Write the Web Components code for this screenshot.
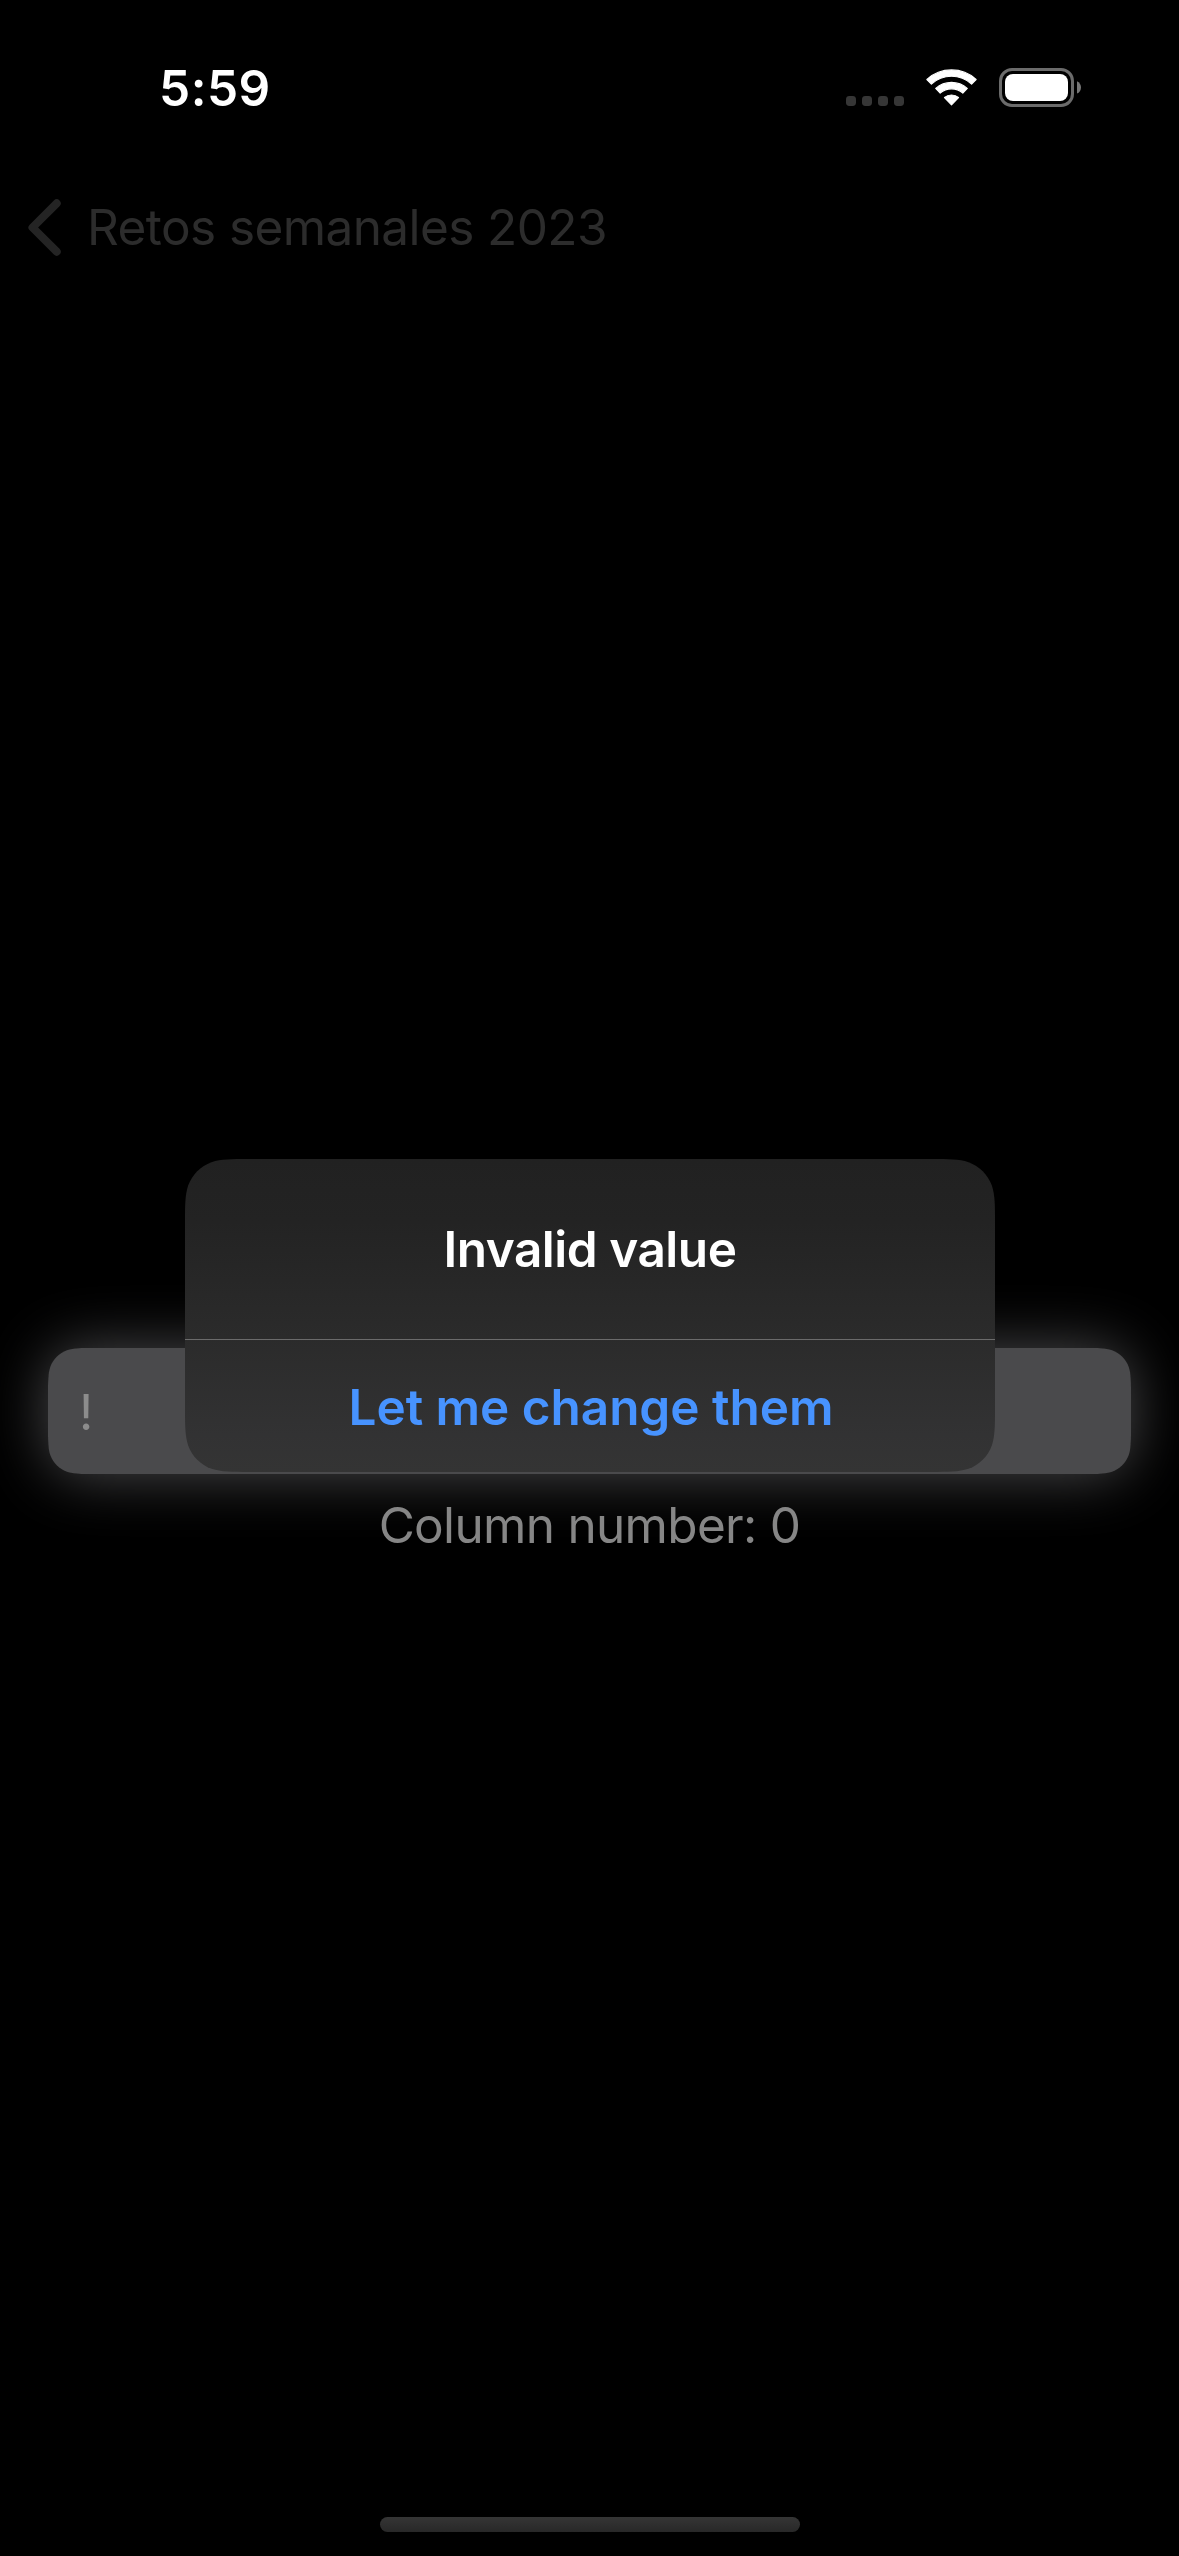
<!DOCTYPE html>
<html lang="es">
<head>
<meta charset="utf-8">
<title>Retos semanales 2023</title>
<style>
html, body { margin: 0; background: #000; }
body { width: 1179px; height: 2556px; overflow: hidden; font: 400 49.5px/60px Inter, sans-serif; }
</style>
</head>
<body>
<app-screen>
  <status-bar slot="status" time="5:59"></status-bar>
  <back-link slot="nav">Retos semanales 2023</back-link>
  <glow-field>!</glow-field>
  <result-label>Column number: 0</result-label>
  <home-indicator slot="home"></home-indicator>
  <alert-dialog slot="overlay">
    <span slot="title">Invalid value</span>
    <span slot="action">Let me change them</span>
  </alert-dialog>
</app-screen>
<script>
// Path of a rectangle with continuous-curvature corners
function continuousRect(w, h, r) {
  const a = 1.528665 * r, b = 1.088493 * r, c = 0.868407 * r, d = 0.631494 * r,
        e = 0.074911 * r, f = 0.372824 * r, g = 0.16906 * r;
  return `M${a},0L${w - a},0C${w - b},0,${w - c},0,${w - d},${e}C${w - f},${g},${w - g},${f},${w - e},${d}C${w},${c},${w},${b},${w},${a}` +
    `L${w},${h - a}C${w},${h - b},${w},${h - c},${w - e},${h - d}C${w - g},${h - f},${w - f},${h - g},${w - d},${h - e}C${w - c},${h},${w - b},${h},${w - a},${h}` +
    `L${a},${h}C${b},${h},${c},${h},${d},${h - e}C${f},${h - g},${g},${h - f},${e},${h - d}C0,${h - c},0,${h - b},0,${h - a}` +
    `L0,${a}C0,${b},0,${c},${e},${d}C${g},${f},${f},${g},${d},${e}C${c},0,${b},0,${a},0Z`;
}
class Base extends HTMLElement {
  connectedCallback() {
    if (!this.shadowRoot) this.attachShadow({ mode: 'open' }).innerHTML = this.render();
  }
}
customElements.define('app-screen', class extends Base {
  render() {
    return `<style>
      :host { display: flex; flex-direction: column; position: relative; width: 1179px; height: 2556px; background: #000; }
      main { flex: 1; display: flex; flex-direction: column; align-items: stretch; padding: 1071px 48px 0; gap: 21px; }
    </style>
    <slot name="status"></slot><slot name="nav"></slot><main><slot></slot></main><slot name="home"></slot><slot name="overlay"></slot>`;
  }
});
customElements.define('status-bar', class extends Base {
  render() {
    return `<style>
      :host { display: flex; justify-content: space-between; align-items: flex-start; height: 119px; padding: 58px 98px 0 159px; color: #fff; }
      .time { font-weight: 600; letter-spacing: .5px; }
      .icons { display: flex; align-items: flex-start; padding-top: 10px; }
      svg { display: block; }
      .dots { margin: 28px 22px 0 0; }
      .wifi { margin: 1px 21px 0 0; }
    </style>
    <span class="time">${this.getAttribute('time')}</span>
    <div class="icons">
      <svg class="dots" width="58" height="10" fill="#363636"><rect width="10" height="10" rx="3.4"/><rect x="16" width="10" height="10" rx="3.4"/><rect x="32" width="10" height="10" rx="3.4"/><rect x="48" width="10" height="10" rx="3.4"/></svg>
      <svg class="wifi" width="52" height="38" viewBox="-25.5 -37 52 38" fill="#fff" stroke="#fff" stroke-width="1.2" stroke-linejoin="round"><path d="M-24.6-26.5A36.4 36.4 0 0 1 24.6-26.5L20.1-21.9A29.7 29.7 0 0 0-20.1-21.9Z"/><path d="M-15.8-17.6A23.8 23.8 0 0 1 15.8-17.6L11.3-13A17.3 17.3 0 0 0-11.3-13Z"/><path d="M-7-8.5A11.1 11.1 0 0 1 7-8.5L0-1.2Z"/></svg>
      <svg width="82" height="39"><rect x="1.5" y="1.5" width="72" height="36" rx="11.5" fill="none" stroke="#6b6b6b" stroke-width="3"/><rect x="6" y="6" width="63" height="27" rx="8" fill="#fff"/><path d="M78 13.2C80.4 14.2 82 16.7 82 19.4S80.4 24.6 78 25.6Z" fill="#777"/></svg>
    </div>`;
  }
});
customElements.define('back-link', class extends Base {
  render() {
    return `<style>
      :host { display: flex; align-items: center; height: 100px; padding-left: 28px; gap: 26px; color: #2c2c2c; letter-spacing: -.59px; }
      svg { display: block; }
    </style>
    <svg width="33" height="57" fill="none" stroke="#242424" stroke-width="8" stroke-linecap="round" stroke-linejoin="round"><path d="M28.7 4.3L4.5 28.5L28.7 52.7"/></svg>
    <span><slot></slot></span>`;
  }
});
customElements.define('glow-field', class extends Base {
  render() {
    return `<style>
      :host { display: block; border-radius: 34px; box-shadow: 0 0 60px #4c4c4e; }
      div { display: flex; align-items: center; box-sizing: border-box; width: 1083px; height: 126px; padding: 1px 31px 0; background: #4a4a4c; color: #8c8c8c; clip-path: path('${continuousRect(1083, 126, 30)}'); }
    </style><div><span><slot></slot></span></div>`;
  }
});
customElements.define('result-label', class extends Base {
  render() {
    return `<style>
      :host { display: block; position: relative; text-align: center; color: #868686; letter-spacing: -.69px; }
    </style><slot></slot>`;
  }
});
customElements.define('home-indicator', class extends Base {
  render() {
    return `<style>
      :host { display: flex; justify-content: center; padding-bottom: 24px; }
      div { width: 420px; height: 15px; margin-left: 1px; border-radius: 7.5px; background: linear-gradient(#353535, #282828); }
    </style><div></div>`;
  }
});
customElements.define('alert-dialog', class extends Base {
  render() {
    return `<style>
      :host { position: absolute; inset: 0; display: flex; justify-content: center; align-items: flex-start; padding: 1159px 0 0 1px; }
      section { display: flex; flex-direction: column; width: 810px; height: 313px; text-align: center; font-weight: 600;
        background: linear-gradient(#212121 0, #232323 20%, #2b2b2b 57%, #323233 88%, #343434 100%); clip-path: path('${continuousRect(810, 313, 42)}'); }
      header { box-sizing: border-box; height: 180px; padding-top: 60px; color: #fff; letter-spacing: -.475px; }
      button { all: unset; display: block; box-sizing: border-box; height: 133px; padding: 37px 0 35px 2px; border-top: 1px solid #6b6b6b; color: #4793ff; letter-spacing: -.05px; }
    </style>
    <section role="alertdialog"><header><slot name="title"></slot></header><button><slot name="action"></slot></button></section>`;
  }
});
</script>
</body>
</html>
